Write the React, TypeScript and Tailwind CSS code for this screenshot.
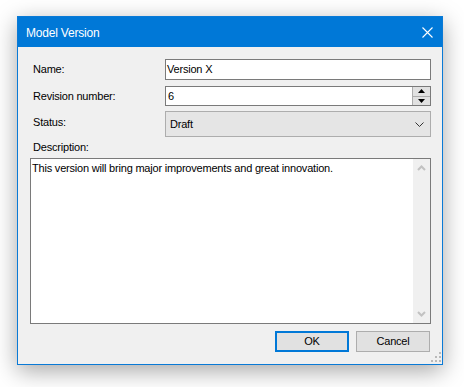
import React from "react";

const font = { fontFamily: '"Liberation Sans", Arial, sans-serif' };

function Grip() {
  const dots: [number, number][] = [
    [8, 0],
    [4, 4],
    [8, 4],
    [0, 8],
    [4, 8],
    [8, 8],
  ];
  return (
    <svg width="10" height="10" viewBox="0 0 10 10" className="absolute right-[1px] bottom-[2px]">
      {dots.map(([x, y], i) => (
        <rect key={i} x={x} y={y} width="2" height="2" fill="#b9b9b9" />
      ))}
    </svg>
  );
}

export default function App() {
  return (
    <div
      className="w-[464px] h-[387px] bg-white pl-[17px] pt-[16px] text-[11px] tracking-[-0.2px] text-black"
      style={font}
    >
      <div className="w-[426px] h-[349px] border border-[#0a7ad6] bg-[#f0f0f0] flex flex-col shadow-[0_6px_22px_rgba(0,0,0,0.35)]">
        <div className="h-[30px] bg-[#0078d7] flex items-center justify-between pl-[8px] pr-[9px] text-white text-[12px] shrink-0">
          <span className="mt-[1px]">Model Version</span>
          <svg width="11" height="11" viewBox="0 0 11 11" className="mr-[0px]">
            <path d="M0.5 0.5 L10.5 10.5 M10.5 0.5 L0.5 10.5" stroke="white" strokeWidth="1.1" />
          </svg>
        </div>
        <div className="relative flex-1 flex flex-col pl-[12px] pr-[11px] pt-[12px]">
          <div className="flex items-center h-[21px]">
            <div className="w-[135px] pl-[3px]">Name:</div>
            <div className="flex-1 h-[21px] bg-white border border-[#7a7a7a] flex items-center pl-[1px]">
              Version X
            </div>
          </div>
          <div className="flex items-center h-[20px] mt-[6px]">
            <div className="w-[135px] pl-[3px]">Revision number:</div>
            <div className="flex-1 h-[20px] bg-white border border-[#7a7a7a] flex items-center">
              <span className="flex-1 pl-[2px] pt-[1px]">6</span>
              <div className="w-[18px] h-full flex flex-col bg-[#e1e1e1] border-l border-[#adadad]">
                <div className="flex-1 flex items-center justify-center border-b border-[#adadad]">
                  <svg width="7" height="4" viewBox="0 0 7 4">
                    <path d="M3.5 0 L7 4 L0 4 Z" fill="#000" />
                  </svg>
                </div>
                <div className="flex-1 flex items-center justify-center">
                  <svg width="7" height="4" viewBox="0 0 7 4">
                    <path d="M0 0 L7 0 L3.5 4 Z" fill="#000" />
                  </svg>
                </div>
              </div>
            </div>
          </div>
          <div className="flex h-[26px] mt-[5px]">
            <div className="w-[135px] pl-[3px] pt-[3px]">Status:</div>
            <div className="flex-1 h-[26px] bg-[#e5e5e5] border border-[#adadad] flex items-center justify-between pl-[4px] pr-[6px]">
              <span className="pt-[1px]">Draft</span>
              <svg width="9" height="5" viewBox="0 0 9 5">
                <path d="M0.5 0.5 L4.5 4.5 L8.5 0.5" stroke="#333" strokeWidth="1" fill="none" />
              </svg>
            </div>
          </div>
          <div className="pl-[3px] mt-[4px] h-[13px] leading-[13px]">Description:</div>
          <div className="mt-[4px] h-[166px] bg-white border border-[#7a7a7a] flex">
            <div className="flex-1 pl-[1px] pt-[2px] leading-[14px]">
              This version will bring major improvements and great innovation.
            </div>
            <div className="w-[17px] h-full bg-[#f0f0f0] flex flex-col items-center justify-between py-[6px]">
              <svg width="9" height="6" viewBox="0 0 9 6">
                <path d="M1 5 L4.5 1.5 L8 5" stroke="#c2c2c2" strokeWidth="2" fill="none" />
              </svg>
              <svg width="9" height="6" viewBox="0 0 9 6">
                <path d="M1 1 L4.5 4.5 L8 1" stroke="#c2c2c2" strokeWidth="2" fill="none" />
              </svg>
            </div>
          </div>
          <div className="flex justify-end gap-[7px] mt-[7px] pr-[1px]">
            <button
              className="w-[74px] h-[21px] bg-[#e1e1e1] border-2 border-[#0078d7] flex items-center justify-center"
              style={font}
            >
              OK
            </button>
            <button
              className="w-[74px] h-[21px] bg-[#e1e1e1] border border-[#adadad] flex items-center justify-center"
              style={font}
            >
              Cancel
            </button>
          </div>
          <Grip />
        </div>
      </div>
    </div>
  );
}
